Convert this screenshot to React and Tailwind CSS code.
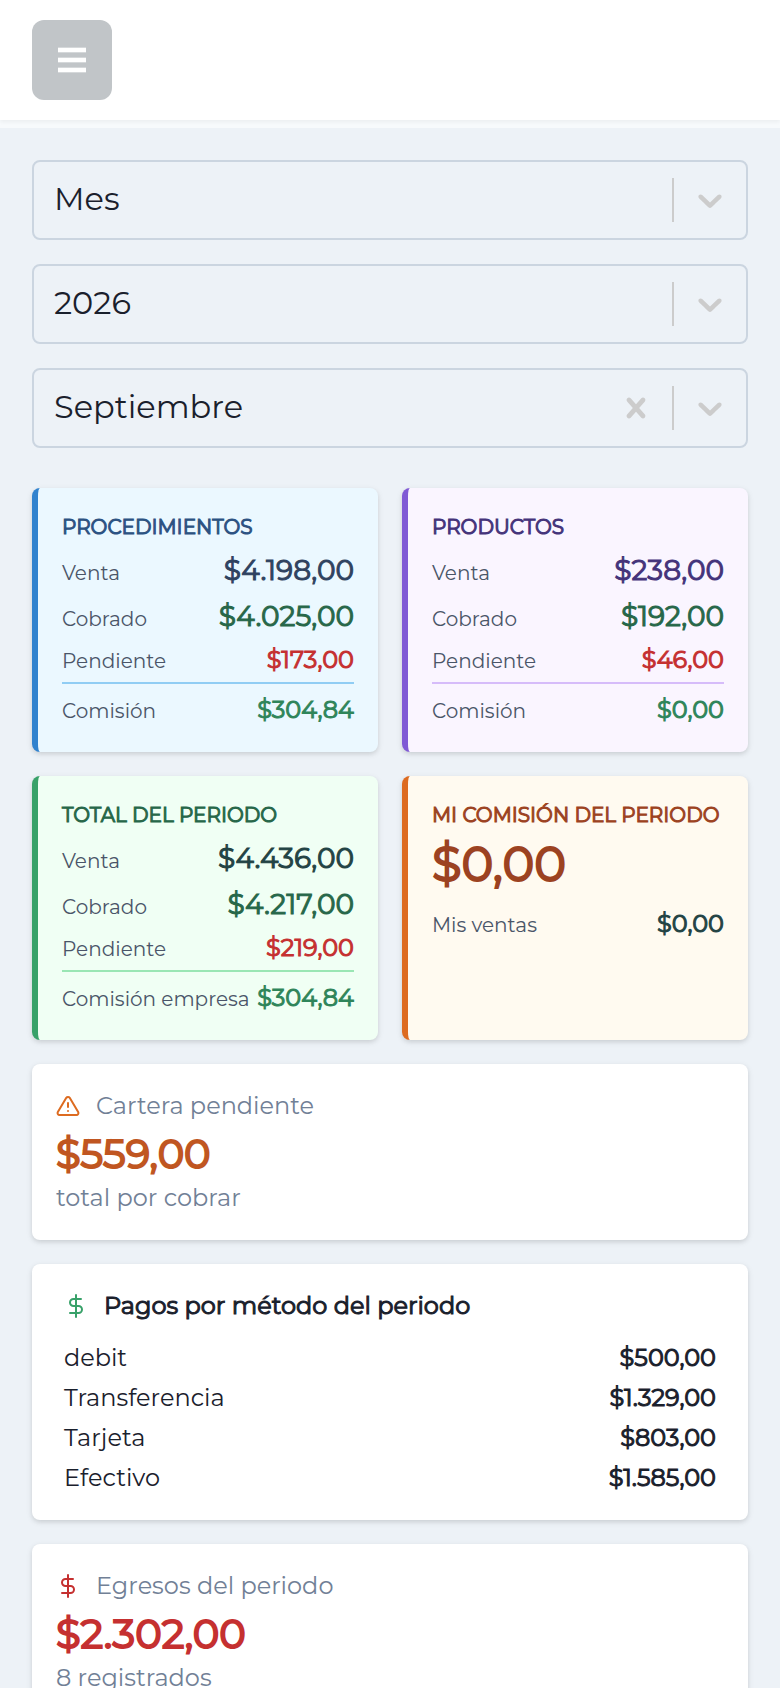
import { useState } from "react";
import { FiAlertTriangle, FiDollarSign } from "react-icons/fi";

const MONTHS = [
  "Enero", "Febrero", "Marzo", "Abril", "Mayo", "Junio",
  "Julio", "Agosto", "Septiembre", "Octubre", "Noviembre", "Diciembre",
];

const PAYMENTS = [
  { method: "debit", amount: "$500,00" },
  { method: "Transferencia", amount: "$1.329,00" },
  { method: "Tarjeta", amount: "$803,00" },
  { method: "Efectivo", amount: "$1.585,00" },
];

const SelectField = ({ label, value, options, onChange, onClear }) => (
  <div className="relative">
    <select
      aria-label={label}
      value={value}
      onChange={(e) => onChange(e.target.value)}
      className="w-full h-20 pl-5 pr-36 pb-0.5 appearance-none rounded-lg border-2 border-[#cbd5e0] bg-transparent text-[32px] text-[#1a202c]"
    >
      {onClear && <option value="" />}
      {options.map((option) => (
        <option key={option}>{option}</option>
      ))}
    </select>

    <div className="absolute inset-y-0 right-[18px] flex items-center gap-4 text-[#cccccc] pointer-events-none">
      {onClear && (
        <button type="button" aria-label="Limpiar" onClick={onClear} className="pointer-events-auto">
          <svg viewBox="0 0 20 20" className="size-10 fill-current">
            <path d="M14.348 14.849c-0.469 0.469-1.229 0.469-1.697 0l-2.651-3.030-2.651 3.029c-0.469 0.469-1.229 0.469-1.697 0-0.469-0.469-0.469-1.229 0-1.697l2.758-3.15-2.759-3.152c-0.469-0.469-0.469-1.228 0-1.697s1.228-0.469 1.697 0l2.652 3.031 2.651-3.031c0.469-0.469 1.228-0.469 1.697 0s0.469 1.229 0 1.697l-2.758 3.152 2.758 3.15c0.469 0.469 0.469 1.229 0 1.698z" />
          </svg>
        </button>
      )}
      <span className="w-0.5 h-11 bg-[#cccccc]" />
      <svg viewBox="0 0 20 20" className="size-10 fill-current">
        <path d="M4.516 7.548c0.436-0.446 1.043-0.481 1.576 0l3.908 3.747 3.908-3.747c0.533-0.481 1.141-0.446 1.574 0 0.436 0.445 0.408 1.197 0 1.615-0.406 0.418-4.695 4.502-4.695 4.502-0.217 0.223-0.502 0.335-0.787 0.335s-0.57-0.112-0.789-0.335c0 0-4.287-4.084-4.695-4.502s-0.436-1.17 0-1.615z" />
      </svg>
    </div>
  </div>
);

const Row = ({ label, children }) => (
  <div className="flex items-baseline justify-between whitespace-nowrap">
    <dt className="text-xl text-[#4a5568]">{label}</dt>
    {children}
  </div>
);

const SummaryCard = ({ title, data, commissionLabel = "Comisión", className, titleClass, saleClass, lineClass }) => (
  <section className={`rounded-lg border-l-6 p-6 shadow-[0_2px_6px_rgba(0,0,0,0.1),0_2px_4px_rgba(0,0,0,0.06)] ${className}`}>
    <h2 className={`mb-2 text-xl leading-[30px] [-webkit-text-stroke:1px] whitespace-nowrap ${titleClass}`}>{title}</h2>
    <dl className="flex flex-col gap-1">
      <Row label="Venta">
        <dd className={`pb-0.5 text-[28px] leading-10 [-webkit-text-stroke:1px] ${saleClass}`}>{data.sale}</dd>
      </Row>
      <Row label="Cobrado">
        <dd className="pb-0.5 text-[28px] leading-10 [-webkit-text-stroke:1px] text-[#276749]">{data.paid}</dd>
      </Row>
      <Row label="Pendiente">
        <dd className="text-2xl leading-9 [-webkit-text-stroke:1px] text-[#c53030]">{data.pending}</dd>
      </Row>
      <div className={`border-t-2 pt-2 ${lineClass}`}>
        <Row label={commissionLabel}>
          <dd className="text-2xl leading-9 [-webkit-text-stroke:1px] text-[#2f855a]">{data.commission}</dd>
        </Row>
      </div>
    </dl>
  </section>
);

const StatCard = ({ icon, label, amount, note, amountClass }) => (
  <section className="rounded-lg bg-white p-6 shadow-[0_2px_6px_rgba(0,0,0,0.1),0_2px_4px_rgba(0,0,0,0.06)]">
    <div className="flex items-center gap-4">
      {icon}
      <h2 className="text-2xl leading-9 text-[#718096]">{label}</h2>
    </div>
    <p className={`mt-1 text-[40px] leading-[52px] [-webkit-text-stroke:2px] ${amountClass}`}>{amount}</p>
    <p className="text-2xl leading-9 text-[#718096]">{note}</p>
  </section>
);

const App = () => {
  const [period, setPeriod] = useState("Mes");
  const [year, setYear] = useState("2026");
  const [month, setMonth] = useState("Septiembre");

  return (
    <div className="h-screen overflow-y-auto [scrollbar-width:none] bg-[#edf2f7] font-['Montserrat','Inter',sans-serif] text-[#1a202c]">
      {/* Top bar */}
      <div className="bg-[#f7fafc] pb-2">
        <header className="flex items-center bg-white px-8 py-5 shadow-[0_2px_4px_rgba(0,0,0,0.05)]">
          <button type="button" aria-label="Abrir menú" className="flex size-20 items-center justify-center rounded-xl bg-[#c1c5c8]">
            <svg viewBox="0 0 84 78" className="h-[26px] w-7 fill-white">
              <rect y="2" width="84" height="14" />
              <rect y="32" width="84" height="14" />
              <rect y="62" width="84" height="14" />
            </svg>
          </button>
        </header>
      </div>

      <main className="px-8 py-8">
        {/* Filters */}
        <div className="flex flex-col gap-6">
          <SelectField label="Periodo" value={period} options={["Día", "Mes", "Año"]} onChange={setPeriod} />
          <SelectField label="Año" value={year} options={["2024", "2025", "2026"]} onChange={setYear} />
          <SelectField label="Mes" value={month} options={MONTHS} onChange={setMonth} onClear={() => setMonth("")} />
        </div>

        {/* Summary */}
        <div className="mt-10 grid grid-cols-2 gap-6">
          <SummaryCard
            title="PROCEDIMIENTOS"
            data={{ sale: "$4.198,00", paid: "$4.025,00", pending: "$173,00", commission: "$304,84" }}
            className="border-[#3182ce] bg-[#ebf8ff]"
            titleClass="text-[#2c5282]"
            saleClass="text-[#2f4260]"
            lineClass="border-[#90cdf4]"
          />
          <SummaryCard
            title="PRODUCTOS"
            data={{ sale: "$238,00", paid: "$192,00", pending: "$46,00", commission: "$0,00" }}
            className="border-[#805ad5] bg-[#faf5ff]"
            titleClass="text-[#44337a]"
            saleClass="text-[#44337a]"
            lineClass="border-[#d6bcfa]"
          />
          <SummaryCard
            title="TOTAL DEL PERIODO"
            commissionLabel="Comisión empresa"
            data={{ sale: "$4.436,00", paid: "$4.217,00", pending: "$219,00", commission: "$304,84" }}
            className="border-[#38a169] bg-[#f0fff4]"
            titleClass="text-[#276749]"
            saleClass="text-[#234344]"
            lineClass="border-[#9ae6b4]"
          />
          <section className="rounded-lg border-l-6 border-[#dd6b20] bg-[#fffaf0] p-6 shadow-[0_2px_6px_rgba(0,0,0,0.1),0_2px_4px_rgba(0,0,0,0.06)]">
            <h2 className="mb-1 text-xl leading-[30px] [-webkit-text-stroke:1px] whitespace-nowrap text-[#9c4221]">
              MI COMISIÓN DEL PERIODO
            </h2>
            <p className="mb-3 text-5xl leading-[60px] [-webkit-text-stroke:2px] text-[#9c4221]">$0,00</p>
            <dl>
              <Row label="Mis ventas">
                <dd className="text-2xl leading-9 [-webkit-text-stroke:1px] text-[#234344]">$0,00</dd>
              </Row>
            </dl>
          </section>
        </div>

        <div className="mt-6 flex flex-col gap-6">
          <StatCard
            icon={<FiAlertTriangle size={24} className="text-[#dd6b20]" />}
            label="Cartera pendiente"
            amount="$559,00"
            note="total por cobrar"
            amountClass="text-[#c05621]"
          />

          {/* Payments by method */}
          <section className="rounded-lg bg-white px-8 pt-6 pb-[22px] shadow-[0_2px_6px_rgba(0,0,0,0.1),0_2px_4px_rgba(0,0,0,0.06)]">
            <div className="mb-[14px] flex items-center gap-4">
              <FiDollarSign size={24} className="text-[#38a169]" />
              <h2 id="payments-title" className="text-2xl leading-9 [-webkit-text-stroke:1px]">Pagos por método del periodo</h2>
            </div>
            <table aria-labelledby="payments-title" className="w-full text-2xl leading-9">
              <tbody>
                {PAYMENTS.map(({ method, amount }) => (
                  <tr key={method}>
                    <th scope="row" className="py-0.5 text-left font-normal">{method}</th>
                    <td className="py-0.5 text-right [-webkit-text-stroke:1px]">{amount}</td>
                  </tr>
                ))}
              </tbody>
            </table>
          </section>

          <StatCard
            icon={<FiDollarSign size={24} className="text-[#c53030]" />}
            label="Egresos del periodo"
            amount="$2.302,00"
            note="8 registrados"
            amountClass="text-[#c53030]"
          />
        </div>
      </main>
    </div>
  );
};

export default App;
